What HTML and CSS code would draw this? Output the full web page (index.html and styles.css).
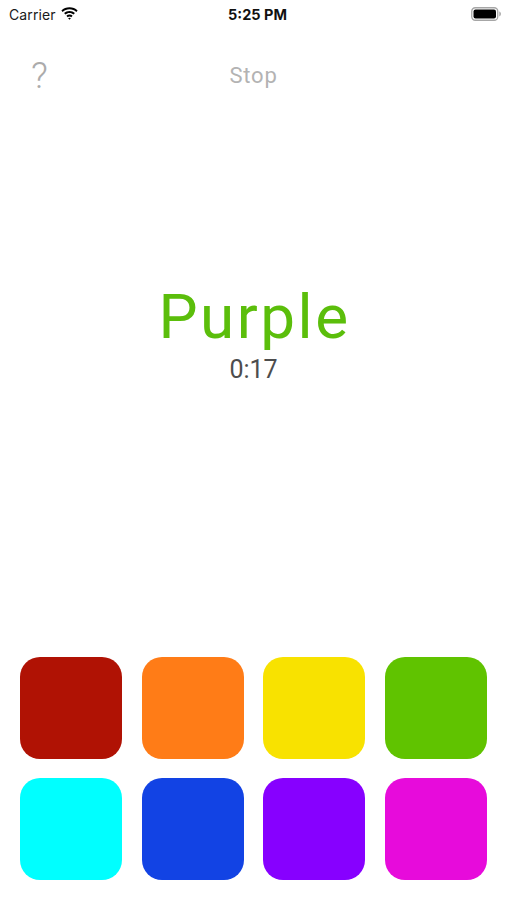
FILE: index.html
```html
<!DOCTYPE html>
<html>
<head>
<meta charset="utf-8">
<link rel="stylesheet" href="styles.css">
</head>
<body>
<div class="screen">
  <div class="status">
    <div class="status-left">
      <span class="carrier">Carrier</span>
      <svg class="wifi" width="17" height="13" viewBox="0 0 17 13">
        <path d="M8.5 2.2c2.6 0 5 1 6.8 2.7l1.3-1.4C14.5 1.5 11.6.3 8.5.3S2.5 1.5.4 3.5l1.3 1.4C3.5 3.2 5.9 2.2 8.5 2.2z" fill="#000"/>
        <path d="M8.5 5.9c1.6 0 3 .6 4.1 1.6l1.3-1.4C12.5 4.8 10.6 4 8.5 4S4.5 4.8 3.1 6.1l1.3 1.4c1.1-1 2.5-1.6 4.1-1.6z" fill="#000"/>
        <path d="M8.5 9.5c.7 0 1.3.3 1.8.7l1.3-1.4C10.8 8 9.7 7.6 8.5 7.6S6.2 8 5.4 8.8l1.3 1.4c.5-.4 1.1-.7 1.8-.7z" fill="#000"/>
        <path d="M8.5 12.8l1.4-1.5c-.4-.3-.9-.5-1.4-.5s-1 .2-1.4.5z" fill="#000"/>
      </svg>
    </div>
    <div class="time">5:25 PM</div>
    <div class="status-right">
      <svg class="battery" width="31" height="14" viewBox="0 0 31 14">
        <rect x="0.75" y="0.75" width="26" height="12.5" rx="3.5" fill="none" stroke="#a6a6a6" stroke-width="1.3"/>
        <rect x="2.5" y="2.5" width="22.5" height="9" rx="2" fill="#000"/>
        <path d="M28.3 4.6v4.8c1-.3 1.6-1.3 1.6-2.4s-.6-2.1-1.6-2.4z" fill="#a6a6a6"/>
      </svg>
    </div>
  </div>

  <div class="nav">
    <div class="help">?</div>
    <div class="stop">Stop</div>
    <div></div>
  </div>

  <div class="main">
    <div class="word">Purple</div>
    <div class="timer">0:17</div>
  </div>

  <div class="grid">
    <div class="swatch red"></div>
    <div class="swatch orange"></div>
    <div class="swatch yellow"></div>
    <div class="swatch green"></div>
    <div class="swatch cyan"></div>
    <div class="swatch blue"></div>
    <div class="swatch purple"></div>
    <div class="swatch magenta"></div>
  </div>
</div>
</body>
</html>
```

FILE: styles.css
```css
html, body {
  margin: 0;
  padding: 0;
  background: #ffffff;
}

body {
  font-family: Inter, "Liberation Sans", Arial, sans-serif;
}

.screen {
  width: 507px;
  height: 900px;
  display: flex;
  flex-direction: column;
  overflow: hidden;
}

.status {
  height: 28px;
  display: grid;
  grid-template-columns: 1fr auto 1fr;
  align-items: center;
  padding: 0 5px 0 9px;
}

.status-left {
  display: flex;
  align-items: center;
  gap: 5px;
}

.carrier {
  font-size: 14px;
  color: #1a1a1a;
  letter-spacing: 0.1px;
}

.wifi {
  display: block;
  margin-top: -1px;
}

.time {
  font-size: 14.5px;
  font-weight: 700;
  color: #111;
  margin-left: 4px;
}

.status-right {
  display: flex;
  justify-content: flex-end;
}

.battery {
  display: block;
}

.nav {
  height: 92px;
  display: grid;
  grid-template-columns: 1fr auto 1fr;
  align-items: start;
  padding: 0 31px;
}

.help {
  font-family: Roboto, sans-serif;
  font-weight: 300;
  font-size: 37px;
  line-height: 37px;
  color: #ababab;
  margin-top: 29px;
}

.stop {
  font-family: Roboto, sans-serif;
  font-size: 22px;
  line-height: 26px;
  color: #b3b3b3;
  margin-top: 35px;
  letter-spacing: 0.8px;
}

.main {
  flex: 1;
  display: flex;
  flex-direction: column;
  align-items: center;
  padding-top: 162px;
}

.word {
  font-family: Roboto, sans-serif;
  font-size: 62px;
  line-height: 70px;
  color: #5bbe0b;
  letter-spacing: 2.5px;
  margin-left: 2px;
}

.timer {
  font-family: Roboto, sans-serif;
  font-size: 25px;
  line-height: 28px;
  color: #4d4d4d;
  margin-top: 4px;
}

.grid {
  display: grid;
  grid-template-columns: repeat(4, 1fr);
  column-gap: 19.67px;
  row-gap: 19px;
  padding: 0 20px 20px 20px;
}

.swatch {
  height: 102px;
  border-radius: 20px;
}

.red { background: #b01204; }
.orange { background: #ff7c17; }
.yellow { background: #f8e200; }
.green { background: #60c300; }
.cyan { background: #00ffff; }
.blue { background: #1243e4; }
.purple { background: #8700ff; }
.magenta { background: #e70bdb; }
```
